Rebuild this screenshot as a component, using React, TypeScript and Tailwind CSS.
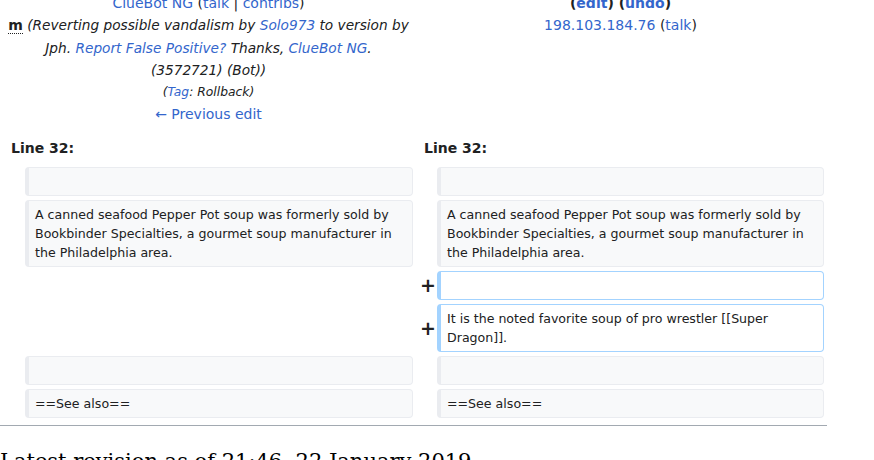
import React from 'react';

const link = 'text-[#3366cc]';

function Box({ added, children }: { added?: boolean; children?: React.ReactNode }) {
  return (
    <div
      className={
        'rounded-[4px] border border-l-4 px-[6px] py-[4px] text-[12.6px] leading-[19px] text-[#202122] ' +
        (added ? 'border-[#a3d3ff] bg-white' : 'border-[#eaecf0] bg-[#f8f9fa]')
      }
    >
      {children ?? <br />}
    </div>
  );
}

function Plus() {
  return (
    <div className="-mr-[3px] flex items-center justify-end">
      <span className="text-[19px] leading-none font-bold text-[#202122]">+</span>
    </div>
  );
}

export default function App() {
  return (
    <div className="h-[460px] w-[874px] overflow-hidden bg-white font-['DejaVu_Sans',sans-serif] text-[#202122]">
      <div className="w-[828px]">
        {/* revision headers */}
        <div className="-mt-[8px] grid grid-cols-[417px_407px] text-center text-[14px] leading-[22.4px]">
          <div>
            <div>
              <span className={link}>ClueBot NG</span> (<span className={link}>talk</span> |{' '}
              <span className={link}>contribs</span>)
            </div>
            <div>
              <span className="border-b border-dotted border-[#202122] font-bold">m</span>{' '}
              <span className="text-[13.7px] italic">
                (Reverting possible vandalism by <span className={link}>Solo973</span> to version by Jph.{' '}
                <span className={link}>Report False Positive?</span> Thanks,{' '}
                <span className={link}>ClueBot NG</span>.{' '}
                <span className="whitespace-nowrap">(3572721) (Bot))</span>
              </span>
            </div>
            <div className="text-[12.32px] italic leading-[21.6px]">
              (<span className={link}>Tag</span>: Rollback)
            </div>
            <div>
              <span className={link}>← Previous edit</span>
            </div>
          </div>
          <div>
            <div className="font-bold">
              (<span className={link}>edit</span>) (<span className={link}>undo</span>)
            </div>
            <div>
              <span className={link}>198.103.184.76</span> (<span className={link}>talk</span>)
            </div>
          </div>
        </div>

        {/* line numbers */}
        <div className="mt-[11px] grid grid-cols-[409px_407px] gap-x-1 px-1 text-[14px] leading-[22.4px] font-bold">
          <div className="pl-[7px]">Line 32:</div>
          <div className="pl-[7px]">Line 32:</div>
        </div>

        {/* diff rows */}
        <div className="mt-[8px] grid grid-cols-[17px_388px_16px_387px] gap-x-1 gap-y-1 px-1">
          <div />
          <Box />
          <div />
          <Box />

          <div />
          <Box>
            A canned seafood Pepper Pot soup was formerly sold by Bookbinder Specialties, a gourmet soup
            manufacturer in the Philadelphia area.
          </Box>
          <div />
          <Box>
            A canned seafood Pepper Pot soup was formerly sold by Bookbinder Specialties, a gourmet soup
            manufacturer in the Philadelphia area.
          </Box>

          <div />
          <div />
          <Plus />
          <Box added />

          <div />
          <div />
          <Plus />
          <Box added>It is the noted favorite soup of pro wrestler [[Super Dragon]].</Box>

          <div />
          <Box />
          <div />
          <Box />

          <div />
          <Box>==See also==</Box>
          <div />
          <Box>==See also==</Box>
        </div>

        <div className="mt-[7px] h-px w-[827px] bg-[#a2a9b1]" />

        <h2 className="mt-[22px] font-['DejaVu_Serif',serif] text-[21px] leading-[1.3] font-normal text-[#000]">
          Latest revision as of 21:46, 22 January 2019
        </h2>
      </div>
    </div>
  );
}
